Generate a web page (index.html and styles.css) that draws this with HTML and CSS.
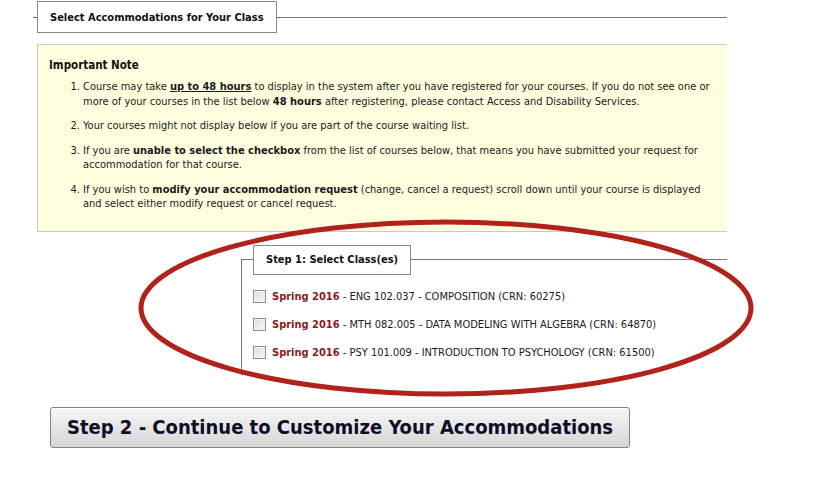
FILE: index.html
```html
<!DOCTYPE html>
<html lang="en">
<head>
  <meta charset="UTF-8" />
  <title>Select Accommodations for Your Class</title>
  <link rel="stylesheet" href="styles.css">
</head>
<body>
  <div class="page">
    <!-- section title -->
    <div class="section-head">
      <span class="legend">Select Accommodations for Your Class</span>
    </div>

    <!-- note box -->
    <div class="note">
      <h3>Important Note</h3>
      <ol>
        <li>Course may take <b><u>up to 48 hours</u></b> to display in the system after you have registered for your courses. If you do not see one or more of your courses in the list below <b>48 hours</b> after registering, please contact Access and Disability Services.</li>
        <li>Your courses might not display below if you are part of the course waiting list.</li>
        <li>If you are <b>unable to select the checkbox</b> from the list of courses below, that means you have submitted your request for accommodation for that course.</li>
        <li>If you wish to <b>modify your accommodation request</b> (change, cancel a request) scroll down until your course is displayed and select either modify request or cancel request.</li>
      </ol>
    </div>

    <!-- step 1 -->
    <div class="step">
      <div class="legend">Step 1: Select Class(es)</div>
      <label class="course"><input type="checkbox"><span><b class="term">Spring 2016</b> - ENG 102.037 - COMPOSITION (CRN: 60275)</span></label>
      <label class="course"><input type="checkbox"><span><b class="term">Spring 2016</b> - MTH 082.005 - DATA MODELING WITH ALGEBRA (CRN: 64870)</span></label>
      <label class="course"><input type="checkbox"><span><b class="term">Spring 2016</b> - PSY 101.009 - INTRODUCTION TO PSYCHOLOGY (CRN: 61500)</span></label>
    </div>

    <button class="continue">Step 2 - Continue to Customize Your Accommodations</button>
  </div>

  <!-- red highlight drawn over the class list -->
  <svg class="circle" width="828" height="486" viewBox="0 0 828 486">
    <ellipse cx="446" cy="308" rx="305" ry="86" fill="none" stroke="#b0221a" stroke-width="5" />
  </svg>
</body>
</html>
```

FILE: styles.css
```css
* { margin: 0; padding: 0; box-sizing: border-box; }
html, body { width: 100%; height: 100%; background: #fff; }
body {
  position: relative;
  overflow: hidden;
  font-family: "DejaVu Sans", Verdana, sans-serif;
  font-stretch: condensed;
  font-size: 11px;
  color: #1a1a1a;
}

.page {
  margin-left: 33px;
  width: 694px;
  overflow: hidden;
}

/* boxed legends sitting on a line */
.section-head {
  display: flex;
  align-items: center;
  margin-top: 1px;
}
.section-head:before { content: ''; width: 4px; border-top: 1px solid #777; }
.section-head:after { content: ''; flex: 1; border-top: 1px solid #777; }
.legend {
  display: flex;
  align-items: center;
  height: 32px;
  padding: 0 12px;
  border: 1px solid #888;
  background: #fff;
  font-weight: bold;
  font-size: 11px;
  color: #111;
}

/* yellow note */
.note {
  margin: 11px 0 0 4px;
  width: 720px;
  background: #ffffe0;
  border: 1px solid #c8c8c8;
  padding: 13px 40px 19px 11px;
}
.note h3 { font-size: 11.5px; line-height: 14px; margin-bottom: 8px; color: #111; }
.note ol { padding-left: 34px; }
.note li { line-height: 14.5px; margin-bottom: 10px; }
.note li:last-child { margin-bottom: 0; }

/* step 1 */
.step {
  margin: 27px 0 0 208px;
  border-top: 1px solid #777;
  border-left: 1px solid #777;
  padding: 0 0 8px 11px;
}
.step .legend { width: fit-content; height: 30px; margin: -15px 0 8px; }
.course {
  display: flex;
  align-items: center;
  height: 28px;
  gap: 6px;
}
.course input {
  appearance: none;
  width: 13px; height: 13px;
  border: 1px solid #8f8f8f;
  background: linear-gradient(135deg, #dcdcdc, #f8f8f8);
  box-shadow: inset 0 0 0 1px #f2f2f2;
}
.term { color: #8b1a1a; }

/* step 2 button */
.continue {
  display: block;
  margin: 32px 0 0 17px;
  width: 580px;
  height: 41px;
  border: 1px solid #858585;
  border-radius: 3px;
  background: linear-gradient(#f6f6f6, #e6e6e6 50%, #d6d6d6);
  box-shadow: inset 0 1px 0 #fff;
  font-family: inherit;
  font-stretch: condensed;
  font-weight: bold;
  font-size: 20px;
  color: #0d0d26;
  cursor: pointer;
}

.circle {
  position: absolute;
  top: 0; left: 0;
  pointer-events: none;
}
```
